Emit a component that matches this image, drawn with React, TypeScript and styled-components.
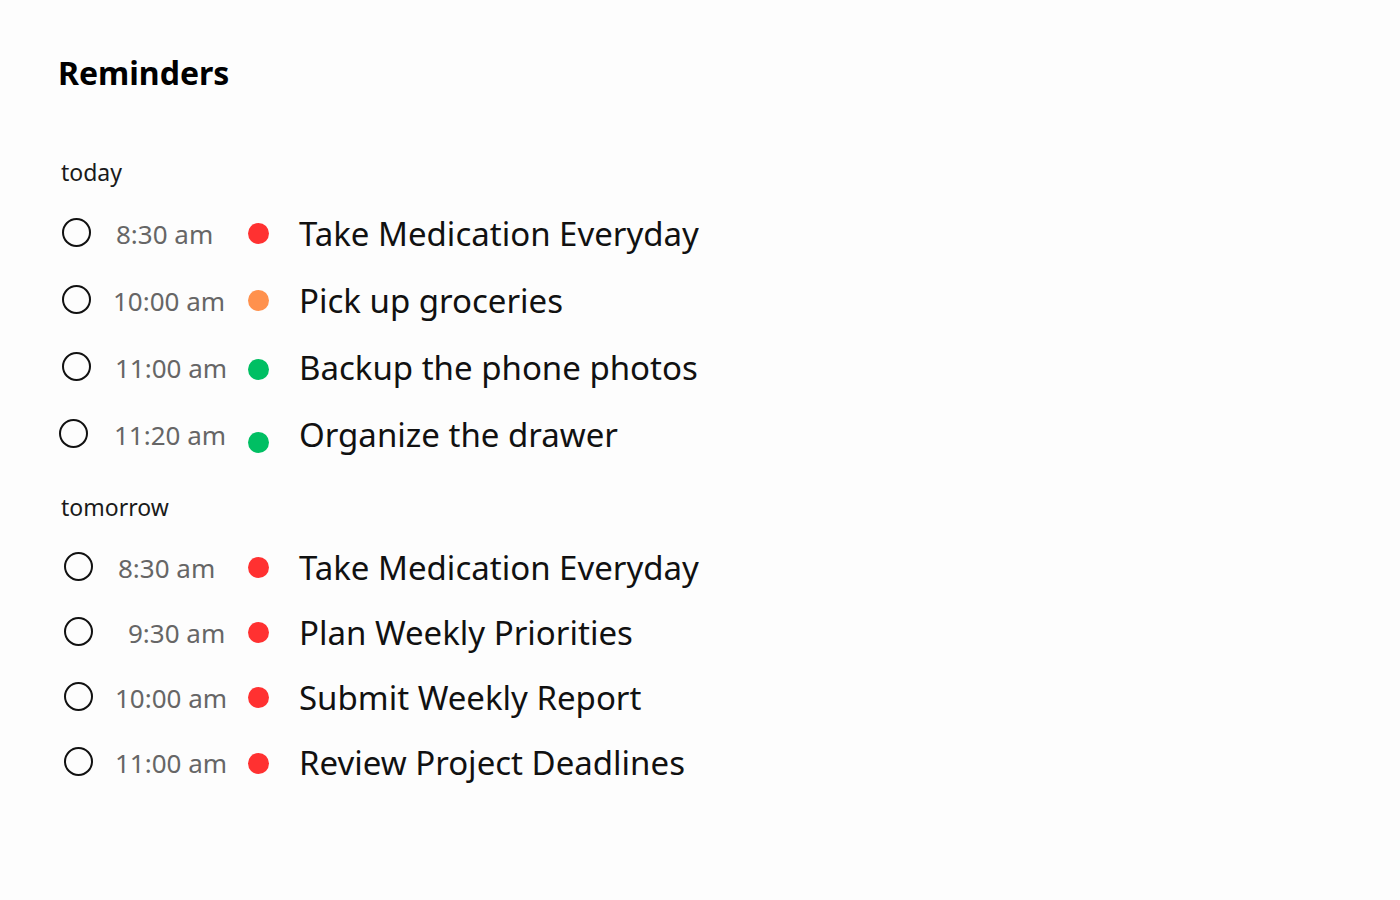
import React from "react";
import styled, { createGlobalStyle } from "styled-components";

const GlobalStyle = createGlobalStyle`
  html, body {
    margin: 0;
    padding: 0;
    background: #fdfdfd;
  }
  body {
    font-family: "Noto Sans", "Open Sans", Arial, sans-serif;
    color: #111;
  }
`;

const Page = styled.main`
  width: 1400px;
  height: 900px;
  box-sizing: border-box;
  padding: 50px 0 0 58px;
  display: flex;
  flex-direction: column;
`;

const Title = styled.h1`
  margin: 0;
  font-size: 32px;
  font-weight: 700;
  line-height: 46px;
  color: #000;
`;

const Section = styled.section<{ $top: number }>`
  display: flex;
  flex-direction: column;
  margin-top: ${(p) => p.$top}px;
`;

const SectionLabel = styled.h2`
  margin: 0 0 8px 3px;
  font-size: 23px;
  font-weight: 400;
  line-height: 40px;
  color: #1a1a1a;
`;

const List = styled.ul<{ $rowHeight: number }>`
  list-style: none;
  margin: 0;
  padding: 0 0 0 4px;
  display: grid;
  grid-auto-rows: ${(p) => p.$rowHeight}px;
`;

const Row = styled.li`
  display: grid;
  grid-template-columns: 53px 133px 51px 1fr;
  align-items: center;
`;

const Check = styled.span<{ $shift: number }>`
  width: 29px;
  height: 29px;
  box-sizing: border-box;
  border: 2px solid #111;
  border-radius: 50%;
  margin-left: ${(p) => p.$shift}px;
  margin-top: -3px;
`;

const Time = styled.span<{ $indent: number }>`
  font-size: 26px;
  color: #666;
  margin-left: ${(p) => p.$indent}px;
  white-space: nowrap;
`;

const Dot = styled.span<{ $color: string; $drop: number }>`
  width: 21px;
  height: 21px;
  border-radius: 50%;
  background: ${(p) => p.$color};
  margin-top: ${(p) => p.$drop}px;
`;

const Task = styled.span`
  font-size: 33px;
  color: #111;
  white-space: nowrap;
`;

const RED = "#ff3131";
const ORANGE = "#ff914d";
const GREEN = "#00bf63";

type Item = {
  time: string;
  title: string;
  color: string;
  indent?: number;
  shift?: number;
  drop?: number;
};

const today: Item[] = [
  { time: "8:30 am", title: "Take Medication Everyday", color: RED, indent: 1 },
  { time: "10:00 am", title: "Pick up groceries", color: ORANGE, indent: -2 },
  { time: "11:00 am", title: "Backup the phone photos", color: GREEN, drop: 4 },
  { time: "11:20 am", title: "Organize the drawer", color: GREEN, indent: -1, shift: -3, drop: 16 },
];

const tomorrow: Item[] = [
  { time: "8:30 am", title: "Take Medication Everyday", color: RED, indent: 3, shift: 2 },
  { time: "9:30 am", title: "Plan Weekly Priorities", color: RED, indent: 13, shift: 2 },
  { time: "10:00 am", title: "Submit Weekly Report", color: RED, shift: 2 },
  { time: "11:00 am", title: "Review Project Deadlines", color: RED, shift: 2, drop: 2 },
];

const ReminderList = ({ items, rowHeight }: { items: Item[]; rowHeight: number }) => (
  <List $rowHeight={rowHeight}>
    {items.map((it, i) => (
      <Row key={i}>
        <Check $shift={it.shift ?? 0} />
        <Time $indent={it.indent ?? 0}>{it.time}</Time>
        <Dot $color={it.color} $drop={it.drop ?? 0} />
        <Task>{it.title}</Task>
      </Row>
    ))}
  </List>
);

export default function App() {
  return (
    <>
      <GlobalStyle />
      <Page>
        <Title>Reminders</Title>
        <Section $top={56}>
          <SectionLabel>today</SectionLabel>
          <ReminderList items={today} rowHeight={67} />
        </Section>
        <Section $top={19}>
          <SectionLabel>tomorrow</SectionLabel>
          <ReminderList items={tomorrow} rowHeight={65} />
        </Section>
      </Page>
    </>
  );
}
